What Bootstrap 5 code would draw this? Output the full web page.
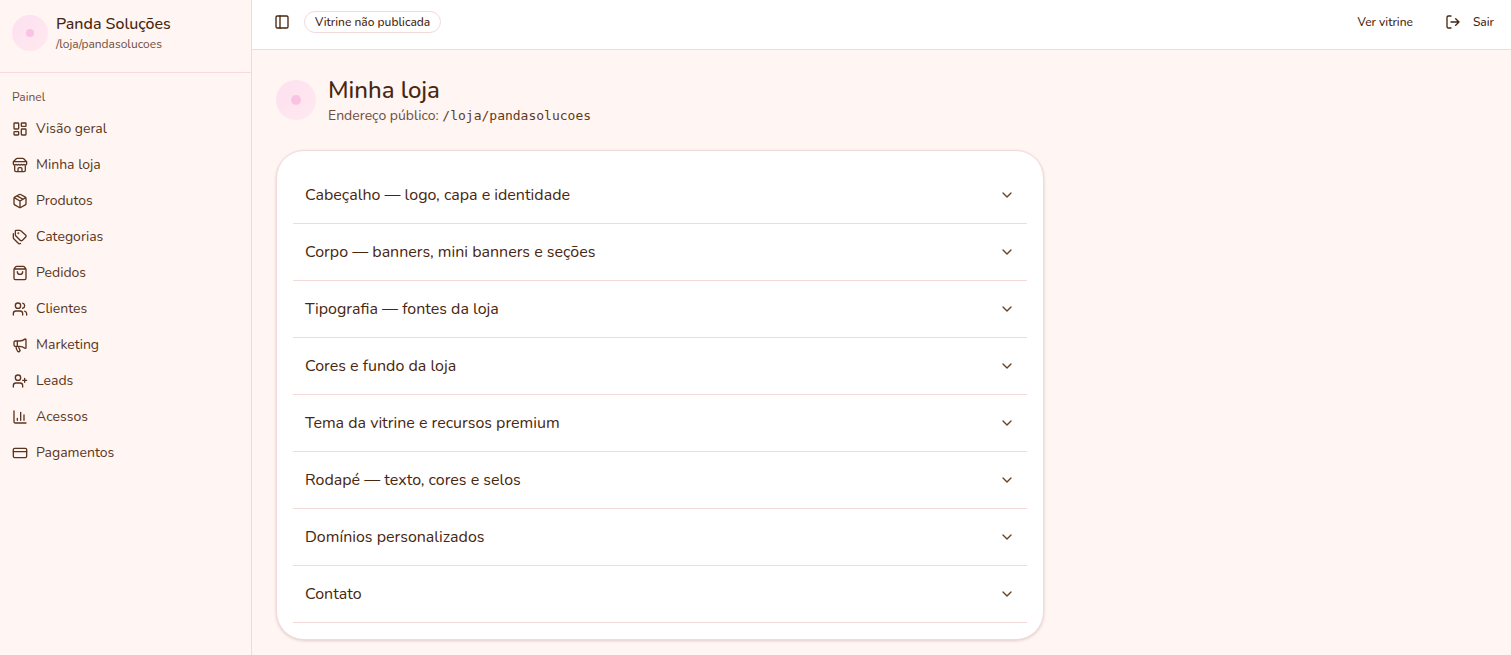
<!DOCTYPE html>
<html lang="pt-BR">
<head>
<meta charset="utf-8">
<meta name="viewport" content="width=device-width, initial-scale=1">
<title>Minha loja</title>
<link href="https://cdn.jsdelivr.net/npm/bootstrap@5.3.0/dist/css/bootstrap.min.css" rel="stylesheet">
<style>
:root { --ink: #48260f; --ink-soft: #6f4c3a; --line: #f2dada; --blush: #fff5f2; }
body { font-family: Nunito, Roboto, sans-serif; color: var(--ink); background: var(--blush); font-size: 14px; line-height: 20px; }
svg { fill: none; stroke: currentColor; stroke-width: 2; stroke-linecap: round; stroke-linejoin: round; flex-shrink: 0; }
.side { width: 252px; flex-shrink: 0; border-right: 1px solid var(--line); }
.side-head { height: 73px; border-bottom: 1px solid #f9d9df; padding: 0 12px 6px; }
.side a { color: #5a3520; }
.side .side-link { height: 32px; }
.side-label { font-size: 12px; line-height: 16px; color: var(--ink-soft); }
.shop-name { font-size: 16px; line-height: 24px; font-weight: 500; }
.shop-info { padding-bottom: 2px; }
.tiny { font-size: 12px; line-height: 16px; }
.orb { width: 40px; height: 40px; border-radius: 50%; background: linear-gradient(135deg, #fde0ef, #ffe9ef); display: grid; place-items: center; flex-shrink: 0; }
.orb::after { content: ""; width: 10px; height: 10px; border-radius: 50%; background: #fac3e4; }
.orb-sm { width: 36px; height: 36px; }
.orb-sm::after { width: 8px; height: 8px; }
.topbar { height: 50px; border-bottom: 1px solid var(--line); padding: 0 17px 6px 22px; }
.bare { border: 0; background: none; padding: 0; color: inherit; }
.pill { border: 1px solid var(--line); border-radius: 11px; height: 22px; padding: 2px 10px; margin-left: 14px; }
.topbar .tiny { font-weight: 500; }
.page-title { font-size: 24px; line-height: 32px; font-weight: 500; }
.address { color: var(--ink-soft); }
.address code { font-family: Consolas, "DejaVu Sans Mono", monospace; font-size: 13px; line-height: 16px; color: #5f3a20; }
.sections { max-width: 768px; border: 1px solid var(--line); border-radius: 28px; box-shadow: 0 1px 3px rgba(110, 50, 50, .2); }
.section-row { border-bottom: 1px solid var(--line); }
.section-row button { height: 56px; font-size: 16px; line-height: 24px; font-weight: 450; padding: 0 12px; }
.section-row svg { color: #6b4020; }
</style>
</head>
<body>
<div class="d-flex min-vh-100">
  <aside class="side">
    <div class="side-head d-flex align-items-center gap-2">
      <span class="orb orb-sm"></span>
      <div class="shop-info">
        <div class="shop-name">Panda Soluções</div>
        <div class="side-label">/loja/pandasolucoes</div>
      </div>
    </div>
    <nav class="pt-3 px-2" aria-label="Painel">
      <div class="side-label ps-1 mb-2">Painel</div>
      <ul class="list-unstyled d-flex flex-column gap-1 ps-1">
        <li><a href="#" class="side-link d-flex align-items-center gap-2 text-decoration-none"><svg width="16" height="16" viewBox="0 0 24 24"><rect x="3" y="3" width="7" height="9" rx="1"/><rect x="14" y="3" width="7" height="5" rx="1"/><rect x="14" y="12" width="7" height="9" rx="1"/><rect x="3" y="16" width="7" height="5" rx="1"/></svg>Visão geral</a></li>
        <li><a href="#" class="side-link d-flex align-items-center gap-2 text-decoration-none"><svg width="16" height="16" viewBox="0 0 24 24"><path d="m2 7 4.41-4.41A2 2 0 0 1 7.83 2h8.34a2 2 0 0 1 1.42.59L22 7M4 12v8a2 2 0 0 0 2 2h12a2 2 0 0 0 2-2v-8M15 22v-4a2 2 0 0 0-2-2h-2a2 2 0 0 0-2 2v4M2 7h20M22 7v3a2 2 0 0 1-2 2 2.7 2.7 0 0 1-1.59-.63.7.7 0 0 0-.82 0A2.7 2.7 0 0 1 16 12a2.7 2.7 0 0 1-1.59-.63.7.7 0 0 0-.82 0A2.7 2.7 0 0 1 12 12a2.7 2.7 0 0 1-1.59-.63.7.7 0 0 0-.82 0A2.7 2.7 0 0 1 8 12a2.7 2.7 0 0 1-1.59-.63.7.7 0 0 0-.82 0A2.7 2.7 0 0 1 4 12a2 2 0 0 1-2-2V7"/></svg>Minha loja</a></li>
        <li><a href="#" class="side-link d-flex align-items-center gap-2 text-decoration-none"><svg width="16" height="16" viewBox="0 0 24 24"><path d="M11 21.73a2 2 0 0 0 2 0l7-4A2 2 0 0 0 21 16V8a2 2 0 0 0-1-1.73l-7-4a2 2 0 0 0-2 0l-7 4A2 2 0 0 0 3 8v8a2 2 0 0 0 1 1.73zM12 22V12M3.3 7 12 12l8.7-5M7.5 4.27l9 5.15"/></svg>Produtos</a></li>
        <li><a href="#" class="side-link d-flex align-items-center gap-2 text-decoration-none"><svg width="16" height="16" viewBox="0 0 24 24"><path d="M13.17 2.59A2 2 0 0 0 11.76 2H6a1 1 0 0 0-1 1v5.76a2 2 0 0 0 .59 1.41l6.7 6.7a2.43 2.43 0 0 0 3.42 0l4.58-4.58a2.43 2.43 0 0 0 0-3.42zM2 7v6.17a2 2 0 0 0 .59 1.42l6.86 6.86a2.4 2.4 0 0 0 3.1.25"/><circle cx="9.5" cy="6.5" r=".5" fill="currentColor"/></svg>Categorias</a></li>
        <li><a href="#" class="side-link d-flex align-items-center gap-2 text-decoration-none"><svg width="16" height="16" viewBox="0 0 24 24"><path d="M3.4 5.47A2 2 0 0 0 3 6.67V20a2 2 0 0 0 2 2h14a2 2 0 0 0 2-2V6.67a2 2 0 0 0-.4-1.2l-2-2.67A2 2 0 0 0 17 2H7a2 2 0 0 0-1.6.8zM3.1 6h17.8M16 10a4 4 0 0 1-8 0"/></svg>Pedidos</a></li>
        <li><a href="#" class="side-link d-flex align-items-center gap-2 text-decoration-none"><svg width="16" height="16" viewBox="0 0 24 24"><path d="M16 21v-2a4 4 0 0 0-4-4H6a4 4 0 0 0-4 4v2M16 3.13a4 4 0 0 1 0 7.75M22 21v-2a4 4 0 0 0-3-3.87"/><circle cx="9" cy="7" r="4"/></svg>Clientes</a></li>
        <li><a href="#" class="side-link d-flex align-items-center gap-2 text-decoration-none"><svg width="16" height="16" viewBox="0 0 24 24"><path d="M11 6a13 13 0 0 0 8.4-2.8A1 1 0 0 1 21 4v12a1 1 0 0 1-1.6.8A13 13 0 0 0 11 14H5a2 2 0 0 1-2-2V8a2 2 0 0 1 2-2zM6 14a12 12 0 0 0 2.4 7.2 2 2 0 0 0 3.2-2.4A8 8 0 0 1 10 14M8 6v8"/></svg>Marketing</a></li>
        <li><a href="#" class="side-link d-flex align-items-center gap-2 text-decoration-none"><svg width="16" height="16" viewBox="0 0 24 24"><path d="M16 21v-2a4 4 0 0 0-4-4H6a4 4 0 0 0-4 4v2M19 8v6M22 11h-6"/><circle cx="9" cy="7" r="4"/></svg>Leads</a></li>
        <li><a href="#" class="side-link d-flex align-items-center gap-2 text-decoration-none"><svg width="16" height="16" viewBox="0 0 24 24"><path d="M3 3v16a2 2 0 0 0 2 2h16M18 17V9M13 17V5M8 17v-3"/></svg>Acessos</a></li>
        <li><a href="#" class="side-link d-flex align-items-center gap-2 text-decoration-none"><svg width="16" height="16" viewBox="0 0 24 24"><rect x="2" y="5" width="20" height="14" rx="2"/><path d="M2 10h20"/></svg>Pagamentos</a></li>
      </ul>
    </nav>
  </aside>
  <div class="flex-grow-1">
    <header class="topbar bg-white d-flex align-items-center">
      <button type="button" class="bare d-flex" aria-label="Alternar menu"><svg width="16" height="16" viewBox="0 0 24 24"><rect x="3" y="3" width="18" height="18" rx="2"/><path d="M9 3v18"/></svg></button>
      <span class="pill tiny">Vitrine não publicada</span>
      <a href="#" class="tiny text-reset text-decoration-none ms-auto">Ver vitrine</a>
      <button type="button" class="bare tiny d-flex align-items-center gap-2 ms-4 ps-2"><svg class="me-1" width="16" height="16" viewBox="0 0 24 24"><path d="M9 21H5a2 2 0 0 1-2-2V5a2 2 0 0 1 2-2h4M16 17l5-5-5-5M21 12H9"/></svg>Sair</button>
    </header>
    <main class="p-4">
      <div class="d-flex align-items-center gap-2 mb-4">
        <span class="orb me-1"></span>
        <div>
          <h1 class="page-title mb-0">Minha loja</h1>
          <div class="address">Endereço público: <code>/loja/pandasolucoes</code></div>
        </div>
      </div>
      <div class="sections bg-white p-3">
        <div class="section-row"><button type="button" class="bare w-100 d-flex align-items-center justify-content-between text-start" aria-expanded="false">Cabeçalho — logo, capa e identidade<svg width="16" height="16" viewBox="0 0 24 24"><path d="m6 9 6 6 6-6"/></svg></button></div>
        <div class="section-row"><button type="button" class="bare w-100 d-flex align-items-center justify-content-between text-start" aria-expanded="false">Corpo — banners, mini banners e seções<svg width="16" height="16" viewBox="0 0 24 24"><path d="m6 9 6 6 6-6"/></svg></button></div>
        <div class="section-row"><button type="button" class="bare w-100 d-flex align-items-center justify-content-between text-start" aria-expanded="false">Tipografia — fontes da loja<svg width="16" height="16" viewBox="0 0 24 24"><path d="m6 9 6 6 6-6"/></svg></button></div>
        <div class="section-row"><button type="button" class="bare w-100 d-flex align-items-center justify-content-between text-start" aria-expanded="false">Cores e fundo da loja<svg width="16" height="16" viewBox="0 0 24 24"><path d="m6 9 6 6 6-6"/></svg></button></div>
        <div class="section-row"><button type="button" class="bare w-100 d-flex align-items-center justify-content-between text-start" aria-expanded="false">Tema da vitrine e recursos premium<svg width="16" height="16" viewBox="0 0 24 24"><path d="m6 9 6 6 6-6"/></svg></button></div>
        <div class="section-row"><button type="button" class="bare w-100 d-flex align-items-center justify-content-between text-start" aria-expanded="false">Rodapé — texto, cores e selos<svg width="16" height="16" viewBox="0 0 24 24"><path d="m6 9 6 6 6-6"/></svg></button></div>
        <div class="section-row"><button type="button" class="bare w-100 d-flex align-items-center justify-content-between text-start" aria-expanded="false">Domínios personalizados<svg width="16" height="16" viewBox="0 0 24 24"><path d="m6 9 6 6 6-6"/></svg></button></div>
        <div class="section-row"><button type="button" class="bare w-100 d-flex align-items-center justify-content-between text-start" aria-expanded="false">Contato<svg width="16" height="16" viewBox="0 0 24 24"><path d="m6 9 6 6 6-6"/></svg></button></div>
      </div>
    </main>
  </div>
</div>
<script src="https://cdn.jsdelivr.net/npm/bootstrap@5.3.0/dist/js/bootstrap.bundle.min.js"></script>
</body>
</html>
